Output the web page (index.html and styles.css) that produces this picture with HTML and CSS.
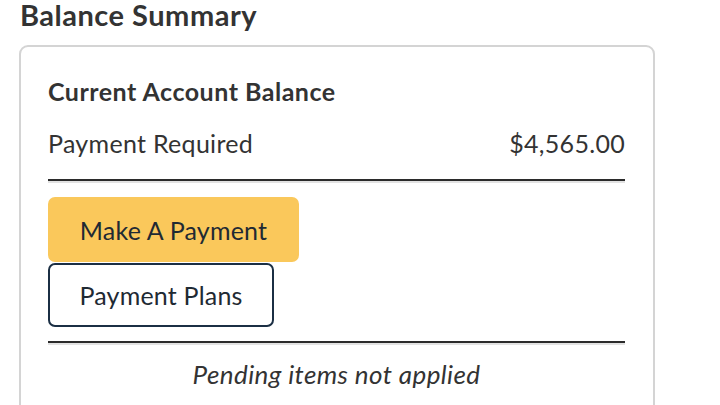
FILE: index.html
```html
<!DOCTYPE html>
<html lang="en">
<head>
  <meta charset="UTF-8" />
  <meta name="viewport" content="width=device-width, initial-scale=1.0" />
  <title>Balance Summary</title>
  <link rel="stylesheet" href="styles.css">
</head>
<body>
  <div class="page">
    <h1>Balance Summary</h1>

    <div class="card">
      <h2>Current Account Balance</h2>
      <div class="row">
        <span>Payment Required</span>
        <span>$4,565.00</span>
      </div>
      <div class="divider"></div>

      <div class="actions">
        <button class="btn btn-primary">Make A Payment</button>
        <button class="btn btn-outline">Payment Plans</button>
      </div>
      <div class="divider"></div>

      <p class="pending">Pending items not applied</p>
    </div>
  </div>
</body>
</html>
```

FILE: styles.css
```css
body {
  margin: 0;
  font-family: Lato, "Open Sans", Arial, sans-serif;
  background-color: #fff;
  color: #333;
}
.page {
  padding: 0 0 0 19px;
  width: 636px;
}
h1 {
  margin: 0 0 0 1px;
  font-size: 29px;
  line-height: 30px;
  letter-spacing: 0.5px;
  font-weight: 700;
  color: #333;
}
.card {
  margin-top: 15px;
  padding: 29px 28px 60px 27px;
  border: 2px solid #d4d4d4;
  border-radius: 9px;
}
h2 {
  margin: 0;
  font-size: 25px;
  line-height: 30px;
  letter-spacing: 0.5px;
  font-weight: 700;
  color: #333;
}
.row {
  display: flex;
  justify-content: space-between;
  margin-top: 22px;
  font-size: 25px;
  line-height: 30px;
  letter-spacing: 0.3px;
  color: #333;
}
.divider {
  height: 2px;
  margin-top: 21px;
  background-color: #2b2b2b;
  border-bottom: 2px solid #e2e2e2;
}
.actions {
  display: flex;
  flex-direction: column;
  align-items: flex-start;
  gap: 1px;
  margin-top: 14px;
}
.actions + .divider {
  margin-top: 14px;
}
.btn {
  font-family: inherit;
  font-size: 25px;
  letter-spacing: 0.2px;
  color: #1f2a33;
  border-radius: 7px;
  cursor: pointer;
}
.btn-primary {
  width: 251px;
  height: 65px;
  background-color: #fac85b;
  border: none;
}
.btn-outline {
  width: 226px;
  height: 64px;
  background-color: #fff;
  border: 2px solid #1b2f44;
}
.pending {
  margin: 14px 0 0;
  text-align: center;
  font-style: italic;
  font-size: 26px;
  line-height: 30px;
  letter-spacing: 0.4px;
  color: #333;
}
```
